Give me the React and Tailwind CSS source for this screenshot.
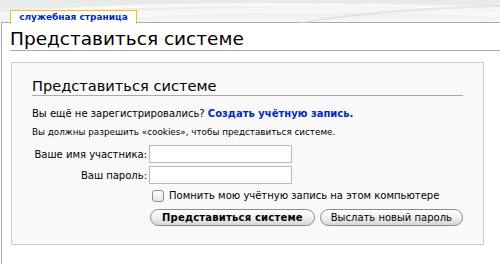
import React from 'react'

const FONT = { fontFamily: '"DejaVu Sans", "Liberation Sans", sans-serif' }

function Swirl() {
  return (
    <svg className="absolute inset-0" width="500" height="23" viewBox="0 0 500 23">
      <path d="M0 14 C120 4 260 2 500 8" stroke="#ffffff" strokeWidth="3" fill="none" opacity="0.7" />
      <path d="M40 23 C140 10 320 6 500 14" stroke="#ffffff" strokeWidth="6" fill="none" opacity="0.5" />
      <path d="M300 23 C360 12 430 8 500 6" stroke="#d8d8d8" strokeWidth="2" fill="none" opacity="0.6" />
    </svg>
  )
}

function PillButton({ children, bold }) {
  return (
    <button
      type="button"
      className={
        'h-[17px] whitespace-nowrap rounded-full border border-[#8a8a8a] bg-gradient-to-b from-white via-[#f0f0f0] to-[#d6d6d6] text-[10px] leading-[15px] text-black shadow-[inset_0_1px_0_#fff] ' +
        (bold ? 'font-bold px-[11px] tracking-[0.2px]' : 'px-[10px]')
      }
    >
      {children}
    </button>
  )
}

export default function App() {
  return (
    <div className="w-[500px] h-[264px] overflow-hidden bg-white text-black" style={FONT}>
      {/* top strip with tab */}
      <div className="relative h-[22px] bg-gradient-to-b from-[#e8e8e8] to-[#f5f5f5]">
        <Swirl />
        <div className="absolute left-[10px] top-[10px] z-10 w-[127px] h-[14px] bg-white border-t border-x border-[#fabd23] flex justify-center">
          <span className="text-[9px] leading-[11px] mt-[1px] font-bold text-[#002bb8]">служебная страница</span>
        </div>
      </div>

      {/* content */}
      <div className="ml-[1px] h-[242px] border-t border-l border-[#aaaaaa] pl-[9px]">
        <h1 className="mt-[5px] -ml-[1px] text-[18.5px] leading-[22px] font-normal border-b border-[#aaaaaa]">
          Представиться системе
        </h1>

        <div className="mt-[11px] w-[473px] h-[183px] border border-[#cccccc] bg-[#f9f9f9] pt-[14px] px-[20px]">
          <h2 className="text-[14.6px] leading-[18px] font-normal border-b border-[#aaaaaa]">
            Представиться системе
          </h2>

          <p className="mt-[11px] text-[10px] leading-[13px] whitespace-nowrap">
            Вы ещё не зарегистрировались?{' '}
            <a href="#" className="text-[#002bb8] font-bold">Создать учётную запись.</a>
          </p>
          <p className="mt-[6px] text-[8.8px] leading-[12px] whitespace-nowrap">
            Вы должны разрешить «cookies», чтобы представиться системе.
          </p>

          <div className="mt-[7px] grid grid-cols-[115px_143px] gap-x-[2px] gap-y-[3px] items-center text-[10px] whitespace-nowrap">
            <label className="text-right">Ваше имя участника:</label>
            <input className="h-[18px] border border-[#b9b9b9] bg-white outline-none" />
            <label className="text-right">Ваш пароль:</label>
            <input type="password" className="h-[18px] border border-[#b9b9b9] bg-white outline-none" />
          </div>

          <div className="mt-[5px] ml-[120px] flex items-center gap-[5px] text-[10px] leading-[14px] whitespace-nowrap">
            <span className="w-[12px] h-[12px] rounded-[3px] border border-[#8f8f8f] bg-gradient-to-b from-white to-[#e4e4e4]" />
            <span>Помнить мою учётную запись на этом компьютере</span>
          </div>

          <div className="mt-[6px] ml-[118px] flex gap-[5px]">
            <PillButton bold>Представиться системе</PillButton>
            <PillButton>Выслать новый пароль</PillButton>
          </div>
        </div>
      </div>
    </div>
  )
}
